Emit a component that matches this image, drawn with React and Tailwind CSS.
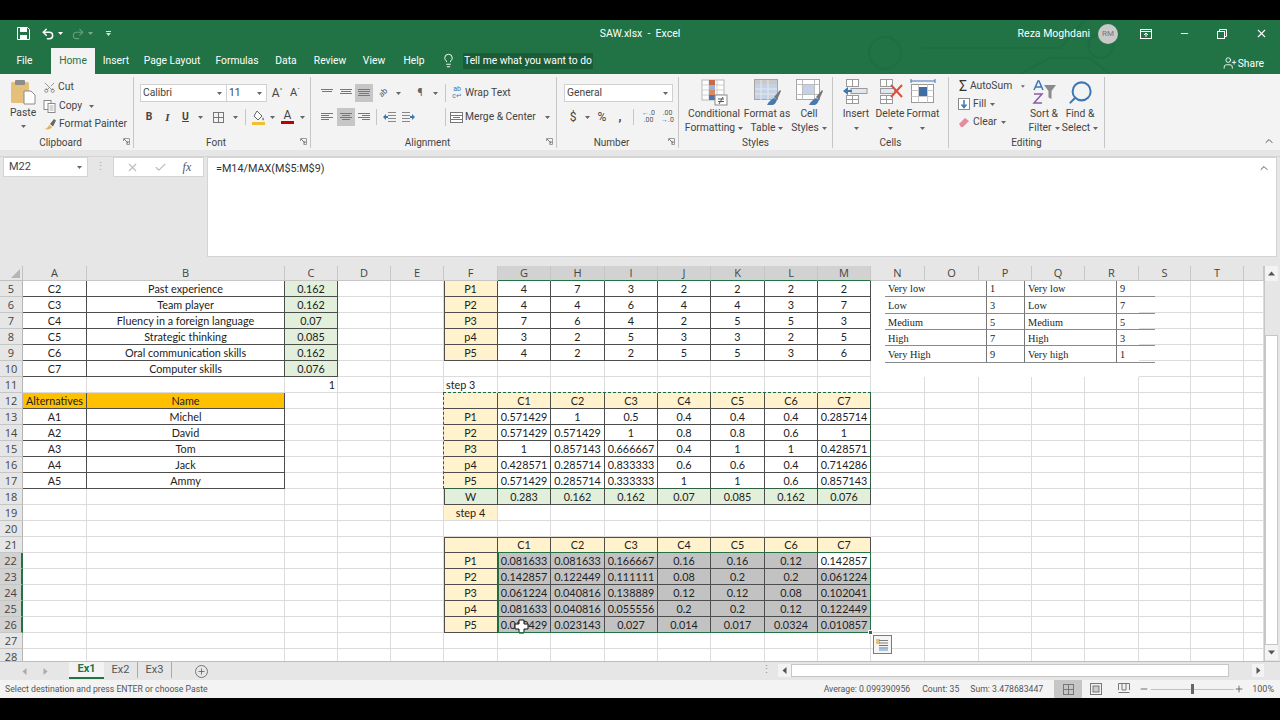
import { Undo2, Redo2, Lightbulb, Scissors, UserPlus, Search, X, Check, ChevronUp, Plus, Minus } from 'lucide-react';

const COLUMNS = ['A', 'B', 'C', 'D', 'E', 'F', 'G', 'H', 'I', 'J', 'K', 'L', 'M', 'N', 'O', 'P', 'Q', 'R', 'S', 'T', ''];
const ROWS = Array.from({ length: 24 }, (_, i) => i + 5);
const SELECTED_COLS = 'GHIJKLM';

const CREAM = 'bg-[#fff2cc]';
const GREEN = 'bg-[#e2efda]';
const ORANGE = 'bg-[#ffc000]';
const GRAY = 'bg-[#c2c2c2]';
const DARK = 'border-r-[#4d4d4d] border-b-[#4d4d4d]';

const cells = {};

function put(col, row, text, bg = '', boxed = true, extra = '') {
  cells[col + row] = { text, bg, boxed, extra };
}

function putRow(row, first, values, bg, firstBg = CREAM) {
  put('F', row, first, firstBg);
  'GHIJKLM'.split('').forEach((c, i) => put(c, row, values[i], bg));
}

// criteria table
[
  ['C2', 'Past experience', '0.162'],
  ['C3', 'Team player', '0.162'],
  ['C4', 'Fluency in a foreign language', '0.07'],
  ['C5', 'Strategic thinking', '0.085'],
  ['C6', 'Oral communication skills', '0.162'],
  ['C7', 'Computer skills', '0.076'],
].forEach((r, i) => {
  put('A', i + 5, r[0]);
  put('B', i + 5, r[1]);
  put('C', i + 5, r[2], GREEN);
});
put('C', 11, '1', '', false, 'justify-end pr-[2px]');

// alternatives
put('A', 12, 'Alternatives', ORANGE);
put('B', 12, 'Name', ORANGE);
['Michel', 'David', 'Tom', 'Jack', 'Ammy'].forEach((n, i) => {
  put('A', i + 13, 'A' + (i + 1));
  put('B', i + 13, n);
});

// step 2 matrix
putRow(5, 'P1', ['4', '7', '3', '2', '2', '2', '2']);
putRow(6, 'P2', ['4', '4', '6', '4', '4', '3', '7']);
putRow(7, 'P3', ['7', '6', '4', '2', '5', '5', '3']);
putRow(8, 'p4', ['3', '2', '5', '3', '3', '2', '5']);
putRow(9, 'P5', ['4', '2', '2', '5', '5', '3', '6']);

// step 3
put('F', 11, 'step 3', '', false, 'justify-start pl-[2px]');
putRow(12, '', ['C1', 'C2', 'C3', 'C4', 'C5', 'C6', 'C7'], CREAM);
putRow(13, 'P1', ['0.571429', '1', '0.5', '0.4', '0.4', '0.4', '0.285714']);
putRow(14, 'P2', ['0.571429', '0.571429', '1', '0.8', '0.8', '0.6', '1']);
putRow(15, 'P3', ['1', '0.857143', '0.666667', '0.4', '1', '1', '0.428571']);
putRow(16, 'p4', ['0.428571', '0.285714', '0.833333', '0.6', '0.6', '0.4', '0.714286']);
putRow(17, 'P5', ['0.571429', '0.285714', '0.333333', '1', '1', '0.6', '0.857143']);
putRow(18, 'W', ['0.283', '0.162', '0.162', '0.07', '0.085', '0.162', '0.076'], GREEN, GREEN);

// step 4
put('F', 19, 'step 4', CREAM, false);
putRow(21, '', ['C1', 'C2', 'C3', 'C4', 'C5', 'C6', 'C7'], CREAM);
putRow(22, 'P1', ['0.081633', '0.081633', '0.166667', '0.16', '0.16', '0.12', '0.142857'], GRAY);
putRow(23, 'P2', ['0.142857', '0.122449', '0.111111', '0.08', '0.2', '0.2', '0.061224'], GRAY);
putRow(24, 'P3', ['0.061224', '0.040816', '0.138889', '0.12', '0.12', '0.08', '0.102041'], GRAY);
putRow(25, 'p4', ['0.081633', '0.040816', '0.055556', '0.2', '0.2', '0.12', '0.122449'], GRAY);
putRow(26, 'P5', ['0.010429', '0.023143', '0.027', '0.014', '0.017', '0.0324', '0.010857'], GRAY);
cells.M22.bg = 'bg-white';

const SCALE = [
  ['Very low', '1', 'Very low', '9'],
  ['Low', '3', 'Low', '7'],
  ['Medium', '5', 'Medium', '5'],
  ['High', '7', 'High', '3'],
  ['Very High', '9', 'Very high', '1'],
];

function Caret({ className = '', light }) {
  return (
    <svg width="5" height="3" viewBox="0 0 5 3" className={className}>
      <path d="M0 0h5L2.5 3z" fill={light ? '#fff' : '#666'} />
    </svg>
  );
}

function Slot({ w, children, className = '' }) {
  return <div className={`flex shrink-0 items-center justify-center ${w} ${className}`}>{children}</div>;
}

function Launcher() {
  return (
    <svg width="7" height="7" viewBox="0 0 7 7" className="absolute right-[3px] bottom-[3px]">
      <path d="M0.5 3V0.5H6.5V6.5H3.5" fill="none" stroke="#9a9a9a" />
      <path d="M1 1l4 4M3 5h2V3" fill="none" stroke="#777" />
    </svg>
  );
}

function Group({ w, label, launcher, children }) {
  return (
    <div className={`relative flex h-[71px] shrink-0 flex-col border-r border-[#c6c6c6] ${w}`}>
      <div className="flex h-[58px] min-h-0">{children}</div>
      <div className={`mt-auto text-center text-[10px] leading-[11px] text-[#444] ${launcher ? 'pr-[12px]' : ''}`}>{label}</div>
      {launcher && <Launcher />}
    </div>
  );
}

function SmallAction({ icon, label, caret, caretClass = 'ml-[5px]', className = '' }) {
  return (
    <div className={`flex h-[18px] items-center gap-[2px] ${className}`}>
      {icon}
      <span className="whitespace-nowrap">{label}</span>
      {caret && <Caret className={caretClass} />}
    </div>
  );
}

function BigButton({ w, icon, lines, caret = true }) {
  return (
    <div className={`flex shrink-0 flex-col items-center ${w}`}>
      <div className="flex h-[30px] items-center">{icon}</div>
      <div className="text-center leading-[14px] whitespace-nowrap">
        {lines.map((line, i) => (
          <div key={i} className="flex h-[14px] items-center justify-center gap-[3px]">
            {line}
            {caret && i === lines.length - 1 && <Caret />}
          </div>
        ))}
      </div>
    </div>
  );
}

function AlignIcon({ widths, active }) {
  return (
    <div className={`flex h-[18px] w-[18px] items-center justify-center ${active ? 'bg-[#c6c6c6]' : ''}`}>
      <svg width="12" height="10" viewBox="0 0 12 10" stroke="#777" strokeWidth="1">
        {widths.map((line, i) => (
          <path key={i} d={`M${line[0]} ${i * 2 + 1.5}H${line[1]}`} />
        ))}
      </svg>
    </div>
  );
}

function IndentIcon({ flip }) {
  return (
    <svg width="13" height="12" viewBox="0 0 13 12" className={flip ? '-scale-x-100' : ''}>
      <path d="M5 1.500h8M5 4.500h8M5 7.500h8M5 10.500h8" stroke="#888" />
      <path d="M0 6l3-3v2h2v2H3v2z" fill="#3c77b8" />
    </svg>
  );
}

function PasteIcon() {
  return (
    <svg width="26" height="26" viewBox="0 0 26 26" className="mt-[2px]">
      <rect x="1" y="3" width="18" height="21" rx="1.5" fill="#e5c07b" />
      <rect x="5" y="1" width="10" height="5" rx="1" fill="#8c8c8c" />
      <path d="M14 12h7l4 4v9H14z" fill="#fff" stroke="#8a8a8a" />
    </svg>
  );
}

function CopyIcon() {
  return (
    <svg width="13" height="13" viewBox="0 0 13 13" fill="#fff" stroke="#8a8a8a">
      <rect x="1" y="0.5" width="7" height="9" />
      <rect x="5" y="3.5" width="7" height="9" />
      <path d="M6.5 6h4M6.5 8h4M6.5 10h4" stroke="#a9a9a9" />
    </svg>
  );
}

function BrushIcon() {
  return (
    <svg width="14" height="13" viewBox="0 0 14 13">
      <path d="M1 11c3 0 4-2 5-4l3 2c-1 2-4 3-8 2z" fill="#e0b35f" />
      <path d="M7 6l4-5 2 1.500-3 6z" fill="#666" />
    </svg>
  );
}

function BordersIcon() {
  return (
    <svg width="13" height="13" viewBox="0 0 13 13" fill="none" stroke="#777">
      <rect x="1.500" y="1.500" width="10" height="10" />
      <path d="M6.500 1.500v10M1.500 6.500h10" />
    </svg>
  );
}

function FillIcon() {
  return (
    <svg width="15" height="15" viewBox="0 0 15 15">
      <path d="M6 1l5 5-4 4-4-4z" fill="#fff" stroke="#666" />
      <path d="M12 7c1 2 1.500 3 0 3.500-1-.5-1-1.500 0-3.500z" fill="#777" />
      <rect x="1" y="12" width="13" height="3" fill="#f0c030" />
    </svg>
  );
}

function ConditionalIcon() {
  return (
    <svg width="28" height="28" viewBox="0 0 28 28">
      <rect x="2" y="2" width="22" height="20" fill="#fff" stroke="#b5b5b5" />
      <path d="M2 7h22M2 12h22M2 17h22M9 2v20M17 2v20" stroke="#cfcfcf" />
      <rect x="9" y="2" width="6" height="5" fill="#c8694a" />
      <rect x="9" y="7" width="6" height="5" fill="#9ab5d6" />
      <rect x="9" y="12" width="6" height="5" fill="#d98a5f" />
      <rect x="9" y="17" width="6" height="5" fill="#4a77ad" />
      <rect x="15" y="17" width="12" height="10" fill="#fff" stroke="#8a8a8a" />
      <path d="M18 21h6M18 23.500h6M23 19l-4 7" stroke="#555" fill="none" />
    </svg>
  );
}

function SwatchBrush() {
  return (
    <g>
      <path d="M14 27c2-4 5-6 7-7l3 2c-1 3-3 5-5 5z" fill="#4a77ad" />
      <path d="M21 19l6-7 1 1-4 9z" fill="#777" />
    </g>
  );
}

function FormatTableIcon() {
  return (
    <svg width="28" height="28" viewBox="0 0 28 28">
      <rect x="1.500" y="1.500" width="23" height="20" fill="#fff" stroke="#a5a5a5" />
      <rect x="2" y="2" width="22" height="4" fill="#c9c9c9" />
      <rect x="2" y="6" width="22" height="15" fill="#c3d2e6" />
      <path d="M2 11h22M2 16h22M8 2v20M15 2v20" stroke="#e8e8e8" />
      <SwatchBrush />
    </svg>
  );
}

function CellStylesIcon() {
  return (
    <svg width="28" height="28" viewBox="0 0 28 28">
      <rect x="1.500" y="1.500" width="23" height="20" fill="#fff" stroke="#a5a5a5" />
      <path d="M1.500 6.500h23M1.500 16.500h23M7.500 1.500v20M19.500 1.500v20" stroke="#bdbdbd" />
      <rect x="8" y="7" width="11" height="9" fill="#c3d2e6" />
      <SwatchBrush />
    </svg>
  );
}

function SheetBlocks() {
  return (
    <g fill="#fff" stroke="#9a9a9a">
      <rect x="4.500" y="1.500" width="12" height="7" />
      <rect x="4.500" y="17.500" width="12" height="8" />
      <path d="M10.500 1.500v7M10.500 17.500v8M4.500 21.500h12" />
    </g>
  );
}

function InsertIcon() {
  return (
    <svg width="28" height="28" viewBox="0 0 28 28">
      <SheetBlocks />
      <rect x="9" y="10.500" width="16" height="5" fill="#dfe6ee" stroke="#9a9a9a" />
      <path d="M1 13l5-4v3h4v2H6v3z" fill="#3c77b8" />
    </svg>
  );
}

function DeleteIcon() {
  return (
    <svg width="28" height="28" viewBox="0 0 28 28">
      <SheetBlocks />
      <rect x="4.500" y="10.500" width="14" height="5" fill="#dfe6ee" stroke="#9a9a9a" />
      <path d="M15 7l11 12M26 7L15 19" stroke="#d9513c" strokeWidth="2" />
    </svg>
  );
}

function FormatIcon() {
  return (
    <svg width="28" height="28" viewBox="0 0 28 28">
      <path d="M2 3h24M2 1v4M26 1v4" stroke="#3c77b8" fill="none" />
      <rect x="2.500" y="6.500" width="22" height="18" fill="#fff" stroke="#9a9a9a" />
      <path d="M2.500 12.500h22M2.500 18.500h22M9.500 6.500v18M18.500 6.500v18" stroke="#c8c8c8" />
      <rect x="10" y="9" width="8" height="9" fill="#3f6ea6" />
    </svg>
  );
}

function SortIcon() {
  return (
    <svg width="26" height="26" viewBox="0 0 26 26">
      <path d="M3 11l4-9h1l4 9M4.500 8h6" fill="none" stroke="#3c77b8" strokeWidth="1.500" />
      <path d="M3 15h8l-8 9h8" fill="none" stroke="#8c5aa5" strokeWidth="1.500" />
      <path d="M13 6h12l-4.500 6v8l-3-1.500V12z" fill="#8a8a8a" />
    </svg>
  );
}

function PasteOptions() {
  return (
    <div className="col-[15] row-[24/26] mt-[2px] ml-[2px] flex h-[19px] w-[19px] items-center justify-center border border-[#6f7f86] bg-[#f5f5f5]">
      <svg width="13" height="13" viewBox="0 0 13 13">
        <rect x="0" y="1" width="4" height="5" fill="#e5c07b" />
        <path d="M3 2.500h9M3 5h9" stroke="#7f7f7f" />
        <path d="M3 7.500h9" stroke="#c0504d" />
        <path d="M3 10h9" stroke="#3c77b8" />
        <path d="M3 12h9" stroke="#5a9bb0" />
      </svg>
    </div>
  );
}

function MoveCursor() {
  return (
    <div className="col-[8] row-[23] mt-[2px] ml-[16px] flex items-center justify-start">
      <svg width="15" height="15" viewBox="0 0 15 15">
        <path d="M5 1h5v4h4v5h-4v4H5v-4H1V5h4z" fill="#fff" stroke="#111" strokeWidth="1" />
      </svg>
    </div>
  );
}

function ScaleTable() {
  return (
    <div className="col-[15/20] row-[2/8] bg-white pl-[14px]">
      <div className="grid w-[270px] grid-cols-[102px_38px_92px_38px] grid-rows-[16px_17px_16px_16px_17px] font-['Liberation_Serif',serif] text-[10.3px] text-[#222]">
        {SCALE.map((row, r) =>
          row.map((value, i) => (
            <div
              key={row[0] + i}
              className={`flex items-center border-b border-[#8a8a8a] pl-[3px] ${r > 0 ? 'pt-[2px]' : ''} ${i < 3 ? 'border-r border-r-[#777]' : ''}`}
            >
              {value}
            </div>
          )),
        )}
      </div>
    </div>
  );
}

function Sheet() {
  return (
    <div className="grid h-[395px] w-[1264px] shrink-0 grid-cols-[23px_64px_198px_53px_53px_53px_54px_53px_54px_53px_53px_54px_53px_53px_54px_54px_53px_53px_54px_52px_53px_20px] grid-rows-[15px_repeat(24,16px)] overflow-hidden bg-white font-['Lato',sans-serif] text-[10.8px] text-[#222]">
      <div className="flex items-end justify-end border-r border-b border-[#c0c0c0] bg-[#e6e6e6] p-[2px]" style={{ gridColumn: 1, gridRow: 1 }}>
        <svg width="9" height="9" viewBox="0 0 9 9">
          <path d="M9 0v9H0z" fill="#b5b5b5" />
        </svg>
      </div>
      {COLUMNS.map((c, i) => (
        <div
          key={c + i}
          style={{ gridColumn: i + 2, gridRow: 1 }}
          className={`flex items-center justify-center border-r border-b border-[#c6c6c6] font-['Open_Sans',sans-serif] text-[11px] text-[#444] ${
            c && SELECTED_COLS.includes(c) ? 'border-b-[#217346] bg-[#d2d2d2]' : 'bg-[#e6e6e6]'
          }`}
        >
          {c}
        </div>
      ))}
      {ROWS.map((r) => (
        <div
          key={r}
          style={{ gridColumn: 1, gridRow: r - 3 }}
          className={`flex items-center justify-center border-b border-[#c6c6c6] pt-[1px] font-['Open_Sans',sans-serif] text-[11px] text-[#444] ${
            r >= 22 && r <= 26 ? 'border-r-2 border-r-[#217346] bg-[#d2d2d2]' : 'border-r border-r-[#b5b5b5] bg-[#e6e6e6]'
          }`}
        >
          {r}
        </div>
      ))}
      {ROWS.map((r) =>
        COLUMNS.map((c, i) => {
          const cell = cells[c + r];
          const border = cell?.boxed ? `border-[#d4d4d4] ${DARK}` : 'border-[#dcdcdc]';
          return (
            <div
              key={c + r + i}
              style={{ gridColumn: i + 2, gridRow: r - 3 }}
              className={`flex items-center justify-center overflow-hidden border-r border-b pt-[1px] whitespace-nowrap ${border} ${cell?.bg || ''} ${cell?.extra || ''}`}
            >
              {cell?.text}
            </div>
          );
        }),
      )}
      {/* left edges of the framed blocks */}
      <div className="col-[7] row-[2/7] border-l border-[#4d4d4d]" />
      <div className="col-[7] row-[15/16] border-l border-[#4d4d4d]" />
      <div className="col-[7] row-[18/24] border-l border-[#4d4d4d]" />
      <div className="col-[7/15] row-[18] border-t border-[#4d4d4d]" />
      {/* copy marquee and current selection */}
      <div className="pointer-events-none col-[7/15] row-[9/15] -mt-[1px] -ml-[1px] border-[1.5px] border-dashed border-[#1d6b3c]" />
      <div className="pointer-events-none relative col-[8/15] row-[19/24] -mt-[1px] border-[1.5px] border-[#217346]">
        <div className="absolute -right-[3px] -bottom-[3px] h-[5px] w-[5px] border border-white bg-[#217346]" />
      </div>
      <MoveCursor />
      <PasteOptions />
      <ScaleTable />
    </div>
  );
}

function TitleBar() {
  return (
    <div className="relative flex h-[24px] items-center pt-[3px] text-[10.5px] text-white">
      <svg width="13" height="13" viewBox="0 0 13 13" className="ml-[17px]">
        <path d="M0.500 0.500h10l2 2v10H0.500z" fill="none" stroke="#fff" />
        <rect x="3" y="1" width="7" height="4" fill="#fff" />
        <rect x="3" y="8" width="7" height="4.500" fill="#fff" />
      </svg>
      <Undo2 size={14} strokeWidth={2.5} className="ml-[11px]" />
      <Caret light className="ml-[3px]" />
      <Redo2 size={14} strokeWidth={2} className="ml-[8px] opacity-30" />
      <Caret light className="ml-[3px] opacity-40" />
      <svg width="5" height="6" viewBox="0 0 5 6" className="ml-[13px] opacity-80">
        <path d="M0 0h5v1H0zM0 2h5L2.500 5z" fill="#fff" />
      </svg>
      <span className="absolute inset-x-0 text-center whitespace-nowrap">SAW.xlsx&nbsp; -&nbsp; Excel</span>
      <div className="relative ml-auto flex items-center">
        <span className="mr-[8px] whitespace-nowrap">Reza Moghdani</span>
        <div className="flex h-[20px] w-[20px] items-center justify-center rounded-full bg-[#c9c9c9] text-[8px] text-[#777]">RM</div>
        <svg width="12" height="10" viewBox="0 0 12 10" className="ml-[22px]" fill="none" stroke="#fff">
          <rect x="0.500" y="0.500" width="11" height="9" />
          <path d="M0.500 2.500h11M6 8V4M4 6l2-2 2 2" />
        </svg>
        <Minus size={11} className="ml-[27px]" />
        <svg width="10" height="10" viewBox="0 0 10 10" className="ml-[27px]" fill="none" stroke="#fff">
          <rect x="0.500" y="2.500" width="7" height="7" />
          <path d="M2.500 2.500v-2h7v7h-2" />
        </svg>
        <X size={13} className="mr-[12px] ml-[28px]" />
      </div>
    </div>
  );
}

function TabRow() {
  return (
    <div className="flex h-[30px] items-end text-[10.3px] text-white">
      <div className="flex h-[26px] w-[51px] items-center justify-center pr-[2px] pb-[1px]">File</div>
      <div className="flex h-[26px] w-[44px] items-center justify-center bg-[#f3f3f3] pb-[1px] text-[#217346]">Home</div>
      <Slot w="w-[42px]" className="h-[26px] pb-[1px]">Insert</Slot>
      <Slot w="w-[70px]" className="h-[26px] pb-[1px]">Page Layout</Slot>
      <Slot w="w-[60px]" className="h-[26px] pb-[1px]">Formulas</Slot>
      <Slot w="w-[38px]" className="h-[26px] pb-[1px]">Data</Slot>
      <Slot w="w-[50px]" className="h-[26px] pb-[1px]">Review</Slot>
      <Slot w="w-[38px]" className="h-[26px] pb-[1px]">View</Slot>
      <Slot w="w-[42px]" className="h-[26px] pb-[1px]">Help</Slot>
      <Lightbulb size={15} strokeWidth={1.5} className="mb-[6px] ml-[6px]" />
      <span className="mb-[5px] ml-[7px] bg-[#195c37] px-[1px] leading-[16px] whitespace-nowrap">Tell me what you want to do</span>
      <div className="mb-[3px] ml-auto flex items-center gap-[1px] pr-[16px]">
        <UserPlus size={14} strokeWidth={1.5} />
        <span>Share</span>
      </div>
    </div>
  );
}

function Ribbon() {
  return (
    <div className="relative flex h-[76px] items-start bg-[#f3f3f3] pt-[3px] text-[10.3px] text-[#444]">
      <Group w="w-[134px]" label="Clipboard" launcher>
        <div className="ml-[6px] flex w-[34px] flex-col items-center">
          <PasteIcon />
          <span className="mt-[1px] leading-[14px]">Paste</span>
          <Caret className="mt-[5px]" />
        </div>
        <div className="mt-[1px] ml-[3px] flex flex-col">
          <SmallAction icon={<Scissors size={13} strokeWidth={1.2} className="-rotate-90 text-[#666]" />} label="Cut" />
          <SmallAction icon={<CopyIcon />} label={<span className="ml-[1px]">Copy</span>} caret className="mt-[1px]" />
          <SmallAction icon={<BrushIcon />} label="Format Painter" />
        </div>
      </Group>

      <Group w="w-[177px]" label="Font" launcher>
        <div className="flex flex-col pl-[6px]">
          <div className="mt-[7px] flex h-[18px] items-center">
            <div className="flex h-[18px] w-[87px] items-center justify-between border border-[#d0d0d0] bg-white pr-[4px] pl-[2px]">
              Calibri
              <Caret />
            </div>
            <div className="flex h-[18px] w-[40px] items-center justify-between border border-l-0 border-[#d0d0d0] bg-white pr-[4px] pl-[2px]">
              11
              <Caret />
            </div>
            <Slot w="w-[18px]" className="ml-[1px] text-[12px]">A<sup className="text-[6px]">^</sup></Slot>
            <Slot w="w-[18px]" className="text-[11px]">A<sup className="text-[6px]">ˇ</sup></Slot>
          </div>
          <div className="mt-[6px] flex h-[18px] items-center">
            <Slot w="w-[18px]" className="font-bold">B</Slot>
            <Slot w="w-[19px]" className="font-['Liberation_Serif',serif] text-[11px] font-bold italic">I</Slot>
            <Slot w="w-[17px]" className="font-bold underline">U</Slot>
            <Slot w="w-[13px]"><Caret /></Slot>
            <Slot w="w-[22px]"><BordersIcon /></Slot>
            <Slot w="w-[13px]"><Caret /></Slot>
            <div className="mx-[3px] h-[16px] w-px bg-[#c6c6c6]" />
            <Slot w="w-[19px]"><FillIcon /></Slot>
            <Slot w="w-[9px]"><Caret /></Slot>
            <Slot w="w-[21px]" className="flex-col text-[12px] leading-[11px]">
              <span>A</span>
              <span className="h-[3px] w-[13px] bg-[#c00000]" />
            </Slot>
            <Slot w="w-[8px]"><Caret /></Slot>
          </div>
        </div>
      </Group>

      <Group w="w-[246px]" label="Alignment" launcher>
        <div className="flex flex-col pl-[7px]">
          <div className="mt-[7px] flex h-[18px] items-center">
            <AlignIcon widths={[[0, 12], [1, 11]]} />
            <span className="w-px" />
            <AlignIcon widths={[[0, 12], [1, 11], [0, 12]]} />
            <AlignIcon widths={[[0, 12], [0, 12], [1, 11], [0, 12]]} active />
            <Slot w="w-[20px]"><span className="-rotate-45 text-[8px] leading-[8px] text-[#555]">ab</span></Slot>
            <Slot w="w-[10px]"><Caret /></Slot>
            <div className="mx-[4px] h-[16px] w-px bg-transparent" />
            <Slot w="w-[16px]" className="text-[#666]">¶</Slot>
            <Slot w="w-[14px]"><Caret /></Slot>
            <div className="mr-[4px] ml-[3px] h-[18px] w-px bg-[#c6c6c6]" />
            <SmallAction
              icon={<span className="w-[12px] text-center text-[7px] leading-[7px] text-[#3c77b8]">ab<br />c↵</span>}
              label="Wrap Text"
              className="ml-[1px]"
            />
          </div>
          <div className="mt-[6px] flex h-[18px] items-center">
            <AlignIcon widths={[[0, 12], [0, 8], [0, 12], [0, 8]]} />
            <span className="w-px" />
            <AlignIcon widths={[[0, 12], [2, 10], [0, 12], [2, 10]]} active />
            <AlignIcon widths={[[0, 12], [4, 12], [0, 12], [4, 12]]} />
            <div className="mx-[3px] h-[16px] w-px bg-[#c6c6c6]" />
            <Slot w="w-[19px]"><IndentIcon /></Slot>
            <Slot w="w-[19px]"><IndentIcon flip /></Slot>
            <div className="mr-[4px] ml-[27px] h-[18px] w-px bg-[#c6c6c6]" />
            <SmallAction
              icon={
                <svg width="13" height="13" viewBox="0 0 13 13" fill="#fff" stroke="#777">
                  <rect x="0.500" y="1.500" width="12" height="10" />
                  <path d="M0.500 4.500h12M0.500 8.500h12M3 6.500h7" />
                </svg>
              }
              label="Merge & Center"
              caret
              caretClass="ml-[7px]"
            />
          </div>
        </div>
      </Group>

      <Group w="w-[122px]" label="Number" launcher>
        <div className="flex flex-col pl-[7px]">
          <div className="mt-[7px] flex h-[18px] w-[109px] items-center justify-between border border-[#d0d0d0] bg-white pr-[4px] pl-[2px]">
            General
            <Caret />
          </div>
          <div className="mt-[6px] flex h-[18px] items-center text-[12px]">
            <Slot w="w-[18px]">$</Slot>
            <Slot w="w-[10px]"><Caret /></Slot>
            <Slot w="w-[20px]">%</Slot>
            <Slot w="w-[16px]" className="font-bold">,</Slot>
            <div className="mx-[5px] h-[16px] w-px bg-[#c6c6c6]" />
            <Slot w="w-[19px]" className="flex-col text-[7px] leading-[7px] text-[#555]">
              <span><span className="text-[#3c77b8]">←</span>.0</span>
              <span>.00</span>
            </Slot>
            <Slot w="w-[19px]" className="flex-col text-[7px] leading-[7px] text-[#555]">
              <span>.00</span>
              <span><span className="text-[#3c77b8]">→</span>.0</span>
            </Slot>
          </div>
        </div>
      </Group>

      <Group w="w-[154px]" label="Styles">
        <BigButton w="w-[70px]" icon={<ConditionalIcon />} lines={['Conditional', 'Formatting']} />
        <BigButton w="w-[36px]" icon={<FormatTableIcon />} lines={['Format as', 'Table']} />
        <BigButton w="w-[48px]" icon={<CellStylesIcon />} lines={['Cell', 'Styles']} />
      </Group>

      <Group w="w-[116px]" label="Cells">
        <BigButton w="w-[46px]" icon={<InsertIcon />} lines={['Insert', '']} />
        <BigButton w="w-[22px]" icon={<DeleteIcon />} lines={['Delete', '']} />
        <BigButton w="w-[44px]" icon={<FormatIcon />} lines={['Format', '']} />
      </Group>

      <Group w="w-[156px]" label="Editing">
        <div className="ml-[9px] flex w-[67px] shrink-0 flex-col">
          <SmallAction
            icon={<span className="w-[13px] text-center text-[14px] leading-[14px] text-[#333]">Σ</span>}
            label="AutoSum"
            caret
            caretClass="ml-[7px]"
          />
          <SmallAction
            icon={
              <svg width="12" height="12" viewBox="0 0 12 12" className="mr-[1px]">
                <rect x="0.500" y="0.500" width="11" height="11" fill="#fff" stroke="#8a8a8a" />
                <path d="M6 2v7M3.500 6.500L6 9.500l2.500-3" fill="none" stroke="#3c77b8" strokeWidth="1.500" />
              </svg>
            }
            label="Fill"
            caret
            caretClass="ml-[2px]"
          />
          <SmallAction
            icon={
              <svg width="12" height="11" viewBox="0 0 12 11" className="mr-[1px]">
                <path d="M1 7l6-6 4 3-6 6H3z" fill="#e88aa0" />
              </svg>
            }
            label="Clear"
            caret
            caretClass="ml-[2px]"
          />
        </div>
        <BigButton w="w-[38px]" icon={<SortIcon />} lines={['Sort &', 'Filter']} />
        <BigButton
          w="w-[34px]"
          icon={<Search size={27} strokeWidth={1.8} className="-scale-x-100 text-[#3c77b8]" />}
          lines={['Find &', 'Select']}
        />
      </Group>

      <ChevronUp size={12} className="absolute right-[5px] bottom-[3px] text-[#555]" />
    </div>
  );
}

function FormulaBar() {
  return (
    <div className="flex h-[100px] bg-[#e6e6e6] pr-[3px] pl-[3px] text-[10.5px] text-[#444]">
      <div className="flex h-[20px] w-[85px] items-center justify-between border border-[#d4d4d4] bg-white pt-[1px] pr-[5px] pl-[5px] text-[11px]">
        M22
        <Caret />
      </div>
      <div className="flex h-[20px] w-[25px] items-center justify-center text-[#aaa]">⋮</div>
      <div className="flex h-[20px] w-[91px] items-center justify-around border border-[#d4d4d4] bg-white px-[4px] text-[#bbb]">
        <X size={13} />
        <Check size={13} />
        <span className="font-['Liberation_Serif',serif] text-[12px] text-[#555] italic">fx</span>
      </div>
      <div className="ml-[3px] flex flex-1 items-start justify-between border border-[#d4d4d4] bg-white pt-[3px] pr-[6px] pl-[8px] text-[10.8px] text-[#333]">
        =M14/MAX(M$5:M$9)
        <ChevronUp size={12} className="mt-[1px] text-[#555]" />
      </div>
    </div>
  );
}

function ScrollArrow({ dir }) {
  const paths = { up: 'M0 4L3.500 0 7 4z', down: 'M0 0l3.500 4L7 0z', left: 'M4 0v7L0 3.500z', right: 'M0 0v7l4-3.500z' };
  return (
    <svg width="7" height="7" viewBox="0 0 7 7">
      <path d={paths[dir]} fill="#555" transform={dir === 'up' || dir === 'down' ? 'translate(0 1.500)' : 'translate(1.500 0)'} />
    </svg>
  );
}

function VerticalScroll() {
  return (
    <div className="flex h-[395px] w-[16px] flex-col border-l border-[#c6c6c6] bg-[#e6e6e6] pr-[2px]">
      <div className="flex h-[15px] w-full items-center justify-center bg-[#f3f3f3]"><ScrollArrow dir="up" /></div>
      <div className="mt-[54px] h-[310px] w-full border border-[#c6c6c6] bg-white" />
      <div className="mt-auto mb-[1px] flex h-[15px] w-full items-center justify-center bg-[#f3f3f3]"><ScrollArrow dir="down" /></div>
    </div>
  );
}

function SheetTabs() {
  return (
    <div className="flex h-[19px] items-start border-t border-[#bdbdbd] bg-[#e6e6e6] text-[11px] text-[#555]">
      <Slot w="w-[69px]" className="h-[18px] gap-[14px] opacity-40">
        <ScrollArrow dir="left" />
        <ScrollArrow dir="right" />
      </Slot>
      <div className="flex h-[17px] w-[35px] items-center justify-center border-b-2 border-[#217346] bg-[#f3f3f3] font-bold text-[#217346]">Ex1</div>
      <Slot w="w-[34px]" className="h-[16px] border-r border-[#aaa]">Ex2</Slot>
      <Slot w="w-[34px]" className="h-[16px] border-r border-[#aaa]">Ex3</Slot>
      <div className="mt-[3px] ml-[23px] flex h-[13px] w-[13px] items-center justify-center rounded-full border border-[#777]">
        <Plus size={9} />
      </div>
      <div className="ml-[553px] text-[#999]">⋮</div>
      <div className="mt-[2px] ml-[6px] flex h-[13px] w-[486px] items-center">
        <div className="flex h-[13px] w-[13px] items-center justify-center bg-[#f3f3f3]"><ScrollArrow dir="left" /></div>
        <div className="h-[13px] w-[438px] border border-[#c6c6c6] bg-white" />
        <div className="ml-auto flex h-[13px] w-[12px] items-center justify-center bg-[#f3f3f3]"><ScrollArrow dir="right" /></div>
      </div>
    </div>
  );
}

function StatusBar() {
  return (
    <div className="flex h-[18px] items-center bg-[#f3f3f3] pl-[5px] text-[8.7px] text-[#555]">
      <span className="pt-[2px]">Select destination and press ENTER or choose Paste</span>
      <span className="ml-auto pt-[2px]">Average: 0.099390956</span>
      <span className="ml-[12px] pt-[2px]">Count: 35</span>
      <span className="ml-[11px] pt-[2px]">Sum: 3.478683447</span>
      <div className="ml-[11px] flex h-[18px] w-[28px] items-center justify-center bg-[#c6c6c6]">
        <BordersIcon />
      </div>
      <Slot w="w-[28px]">
        <svg width="12" height="12" viewBox="0 0 12 12" fill="none" stroke="#777">
          <rect x="0.500" y="0.500" width="11" height="11" />
          <rect x="3" y="3" width="6" height="6" fill="#ccc" />
        </svg>
      </Slot>
      <Slot w="w-[28px]">
        <svg width="12" height="12" viewBox="0 0 12 12" fill="none" stroke="#777">
          <path d="M0.500 7V0.500h11V7M0.500 9.500h11M4 0.500V7h4V0.500" />
        </svg>
      </Slot>
      <Minus size={10} className="ml-[1px]" />
      <div className="relative ml-[2px] flex h-[10px] w-[83px] items-center">
        <div className="h-px w-full bg-[#c0c0c0]" />
        <div className="absolute left-[40px] h-[10px] w-[3px] bg-[#666]" />
      </div>
      <Plus size={10} />
      <span className="mr-[6px] ml-[8px] pt-[2px] text-[9px]">100%</span>
    </div>
  );
}

export default function App() {
  return (
    <div className="flex h-[720px] w-[1280px] flex-col overflow-hidden bg-black pt-[20px] font-['Roboto',sans-serif]">
      <div className="relative bg-[#217346]">
        <svg width="300" height="54" viewBox="0 0 300 54" className="absolute top-0 right-[120px]" fill="none" stroke="#1f6d42" strokeWidth="2">
          <circle cx="25" cy="33" r="16" />
          <path d="M63 28h137l25-28M160 54l30-16h40l20 16M240 14a12 12 0 1 0 1 0" />
        </svg>
        <TitleBar />
        <TabRow />
      </div>
      <Ribbon />
      <div className="h-[7px] border-b border-[#d4d4d4] bg-[#e6e6e6]" />
      <FormulaBar />
      <div className="h-[9px] bg-[#e6e6e6]" />
      <div className="flex">
        <Sheet />
        <VerticalScroll />
      </div>
      <SheetTabs />
      <StatusBar />
    </div>
  );
}
